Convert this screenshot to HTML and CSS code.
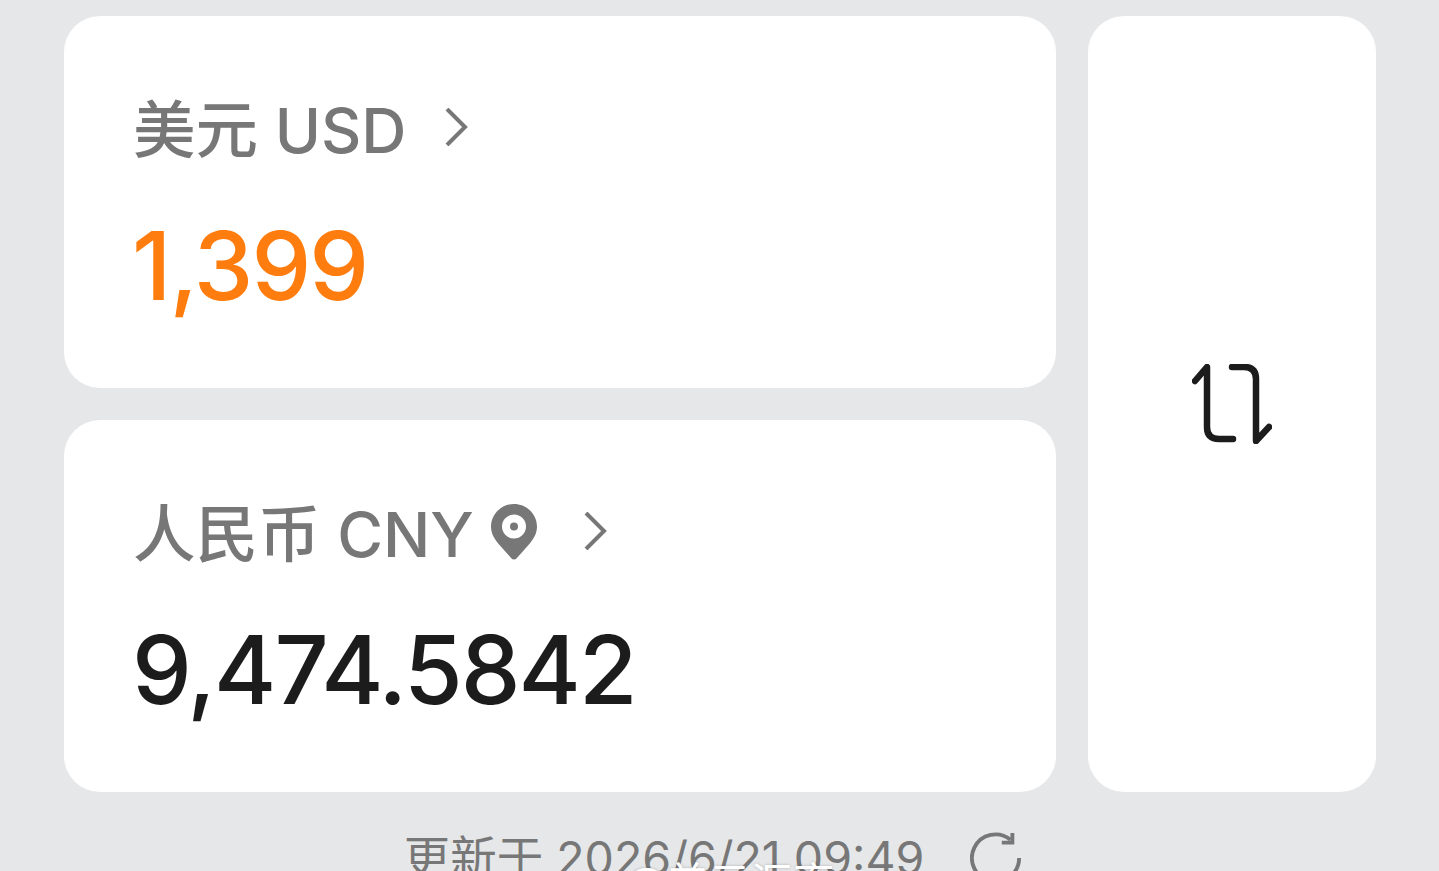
FILE: index.html
```html
<!DOCTYPE html>
<html lang="zh-CN">
<head>
<meta charset="utf-8">
<title>汇率换算</title>
<link rel="stylesheet" href="styles.css">
</head>
<body>
<main class="page">
  <section class="converter">
    <div class="card card-from">
      <div class="label"><span class="name">美元 USD</span>
        <svg class="chevron chevron-from" viewBox="0 0 24 38"><path d="M2 1 L20 19 L2 37"/></svg>
      </div>
      <div class="amount amount-orange">1,399</div>
    </div>
    <div class="card card-to">
      <div class="label"><span class="name">人民币 CNY</span>
        <svg class="pin" viewBox="0 0 46 56"><path fill-rule="evenodd" d="M23 0C10.300 0 0 10.100 0 22.800C0 30 3.800 35.500 8.300 40.700L20.300 54.200C21.800 55.900 24.200 55.900 25.700 54.200L37.700 40.700C42.200 35.500 46 30 46 22.800C46 10.100 35.700 0 23 0ZM23 10.500A12 12 0 1 1 23 34.500A12 12 0 1 1 23 10.500ZM23 18.500A4 4 0 1 0 23 26.500A4 4 0 1 0 23 18.500Z"/></svg>
        <svg class="chevron chevron-to" viewBox="0 0 24 38"><path d="M2 1 L20 19 L2 37"/></svg>
      </div>
      <div class="amount">9,474.5842</div>
    </div>
    <div class="card card-swap">
      <svg class="swap" viewBox="0 0 80 80"><path d="M3 17 L15 3 V63 Q15 75 27 75 H41"/><path d="M40 3 H52 Q64 3 64 15 V77 L77 63"/></svg>
    </div>
  </section>
  <footer class="updated">
    <span>更新于 2026/6/21 09:49</span>
    <svg class="refresh" viewBox="0 0 54 54"><path d="M42 8 A24.500 24.500 0 1 0 51 27"/><path d="M44 1 V11 H33"/></svg>
  </footer>
  <div class="watermark">@美元汇率</div>
</main>
</body>
</html>
```

FILE: styles.css
```css
* { box-sizing: border-box; }
html, body { margin: 0; height: 871px; overflow: hidden; }
body { background: #e6e7e9; font-family: Inter, "Noto Sans CJK SC", sans-serif; }
.page { position: relative; height: 871px; padding: 16px 63px 0 64px; overflow: hidden; }
.converter { display: grid; grid-template-columns: 992px 288px; grid-template-rows: 372px 372px; gap: 32px; }
.card { background: #fff; border-radius: 36px; }
.card-from, .card-to { padding: 79px 0 0 69px; }
.card-from { grid-column: 1; grid-row: 1; }
.card-to { grid-column: 1; grid-row: 2; }
.card-swap { grid-column: 2; grid-row: 1 / span 2; display: flex; align-items: center; justify-content: center; }
.label { display: flex; align-items: center; height: 70px; color: #777; font-size: 62.5px; font-weight: 500; line-height: 70px; }
.name { white-space: nowrap; }
.chevron { width: 24px; height: 38px; margin-top: -6px; fill: none; stroke: #777; stroke-width: 4; }
.chevron-from { margin-left: 39px; }
.chevron-to { margin-left: 47px; }
.pin { width: 46px; height: 56px; margin: -4px 0 0 17px; fill: #777; }
.amount { margin: 51px 0 0 -1px; height: 100px; color: #1c1c1c; font-size: 95px; font-weight: 500; line-height: 100px; letter-spacing: -2px; white-space: nowrap; }
.amount-orange { color: #ff7d0f; }
.swap { width: 80px; height: 80px; fill: none; stroke: #1c1c1c; stroke-width: 6.5; stroke-linecap: round; stroke-linejoin: round; }
.updated { display: flex; align-items: center; justify-content: center; gap: 46px; margin-top: 38px; margin-left: 59px; width: 1180px; color: #777; font-size: 46.5px; line-height: 56px; white-space: nowrap; }
.updated span { display: block; }
.refresh { width: 52px; height: 54px; fill: none; stroke: #777; stroke-width: 4; }
.watermark { position: absolute; left: 626px; top: 858px; color: #fff; font-size: 42px; line-height: 50px; text-shadow: 0 0 3px rgba(0,0,0,.25); }
```
